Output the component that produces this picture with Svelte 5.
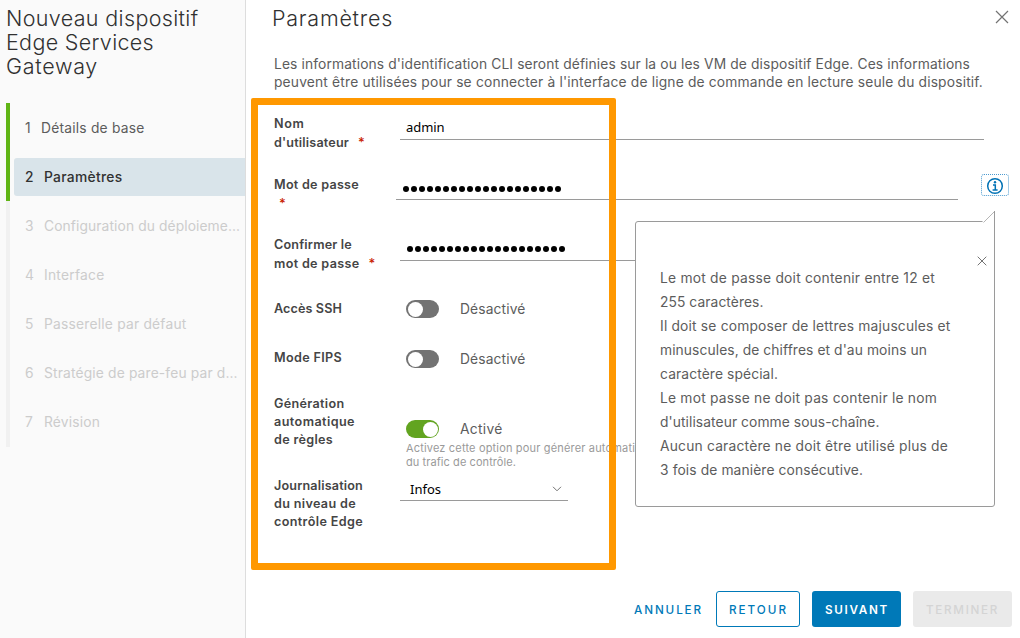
<script>
  const title = [['Nouveau dispositif', 192.5], ['Edge Services', 148], ['Gateway', 92]];

  const steps = [
    { label: 'Détails de base', width: 103.5, state: 'done' },
    { label: 'Paramètres', width: 78.5, state: 'current' },
    { label: 'Configuration du déploieme…', width: 196, state: 'todo' },
    { label: 'Interface', width: 60.5, state: 'todo' },
    { label: 'Passerelle par défaut', width: 142.5, state: 'todo' },
    { label: 'Stratégie de pare-feu par d…', width: 193.5, state: 'todo' },
    { label: 'Révision', width: 56, state: 'todo' }
  ];

  const intro = [
    ["Les informations d'identification CLI seront définies sur la ou les VM de dispositif Edge. Ces informations", 696],
    ["peuvent être utilisées pour se connecter à l'interface de ligne de commande en lecture seule du dispositif.", 709]
  ];

  const rules = [
    ['Le mot de passe doit contenir entre 12 et', 275],
    ['255 caractères.', 103.5],
    ['Il doit se composer de lettres majuscules et', 290.5],
    ["minuscules, de chiffres et d'au moins un", 267],
    ['caractère spécial.', 118],
    ['Le mot passe ne doit pas contenir le nom', 277],
    ["d'utilisateur comme sous-chaîne.", 219.5],
    ['Aucun caractère ne doit être utilisé plus de', 288],
    ['3 fois de manière consécutive.', 203]
  ];

  const dots = Array.from({ length: 20 });

  // Tracks a line of text so that it fills the given measure.
  function measure(node, width) {
    const natural = node.getBoundingClientRect().width;
    node.style.letterSpacing = (width - natural) / node.textContent.length + 'px';
  }
</script>

{#snippet line(text, width)}<span class="line" use:measure={width}>{text}</span>{/snippet}

{#snippet password()}
  <span class="dots">{#each dots as _}<i></i>{/each}</span>
{/snippet}

<div class="wizard">
  <aside>
    <h1>{#each title as [t, w]}{@render line(t, w)}{/each}</h1>
    <ol>
      {#each steps as step, i}
        <li class={step.state}>
          <div class="step">
            <span class="num">{i + 1}</span>{@render line(step.label, step.width)}
          </div>
        </li>
      {/each}
    </ol>
  </aside>

  <main>
    <header>
      <h2>{@render line('Paramètres', 121)}</h2>
      <svg class="close" width="14" height="14" viewBox="0 0 14 14"><path d="M1 1l12 12M13 1L1 13" /></svg>
    </header>
    <p class="intro">{#each intro as [t, w]}{@render line(t, w)}{/each}</p>

    <form>
      <div class="row user">
        <div class="label">
          {@render line('Nom', 30.5)}
          <div class="req">{@render line("d'utilisateur", 75)}<b>*</b></div>
        </div>
        <div class="field"><span class="value">{@render line('admin', 38.5)}</span></div>
      </div>
      <div class="row pass">
        <div class="label">
          {@render line('Mot de passe', 85)}
          <b class="below">*</b>
        </div>
        <div class="field">{@render password()}</div>
        <span class="info">
          <svg width="18" height="18" viewBox="0 0 18 18">
            <circle cx="9" cy="9" r="7.3" />
            <path d="M7 8h2.3v5M6.6 13h5" />
            <circle class="tittle" cx="9" cy="5.2" r="1.2" />
          </svg>
        </span>
      </div>
      <div class="row confirm">
        <div class="label">
          {@render line('Confirmer le', 78)}
          <div class="req">{@render line('mot de passe', 85.5)}<b>*</b></div>
        </div>
        <div class="field">{@render password()}</div>
      </div>
      <div class="row ssh">
        <div class="label">{@render line('Accès SSH', 68)}</div>
        <div class="switch"><span class="toggle"></span>{@render line('Désactivé', 65.5)}</div>
      </div>
      <div class="row fips">
        <div class="label">{@render line('Mode FIPS', 68)}</div>
        <div class="switch"><span class="toggle"></span>{@render line('Désactivé', 65.5)}</div>
      </div>
      <div class="row auto">
        <div class="label">
          {@render line('Génération', 70.5)}{@render line('automatique', 81)}{@render line('de règles', 59)}
        </div>
        <div>
          <div class="switch"><span class="toggle on"></span>{@render line('Activé', 42.5)}</div>
          <div class="help">
            {@render line('Activez cette option pour générer automatiquement', 276)}{@render line('du trafic de contrôle.', 110)}
          </div>
        </div>
      </div>
      <div class="row log">
        <div class="label">
          {@render line('Journalisation', 89)}{@render line('du niveau de', 82)}{@render line('contrôle Edge', 89)}
        </div>
        <div class="select">
          {@render line('Infos', 31)}
          <svg width="10" height="6" viewBox="0 0 10 6"><path d="M1 .8l4 4 4-4" /></svg>
        </div>
      </div>
    </form>

    <footer>
      <span class="btn link">{@render line('ANNULER', 69)}</span>
      <span class="btn outline">{@render line('RETOUR', 59)}</span>
      <span class="btn primary">{@render line('SUIVANT', 64)}</span>
      <span class="btn disabled">{@render line('TERMINER', 73)}</span>
    </footer>
  </main>

  <div class="highlight"></div>

  <div class="popover">
    <svg class="pointer" width="13" height="13" viewBox="0 0 13 13">
      <path class="fill" d="M0 13V11L12 0V13z" />
      <path class="slope" d="M1.5 11.5L12.5 .5" />
      <path class="side" d="M12.5 0V13" />
    </svg>
    <svg class="dismiss" width="10" height="10" viewBox="0 0 10 10"><path d="M.7 .7l8.6 8.6M9.3 .7L.7 9.3" /></svg>
    {#each rules as [t, w]}{@render line(t, w)}{/each}
  </div>
</div>

<style>
  :global(body) { margin: 0; background: #fff; }
  .wizard {
    position: relative;
    display: flex;
    width: 1020px;
    height: 638px;
    overflow: hidden;
    background: #fff;
    color: #5c5c5c;
    font: 400 13.8px/18px Inter, sans-serif;
  }
  .line { display: block; width: max-content; white-space: nowrap; }
  h1, h2, p, ol { margin: 0; padding: 0; font-weight: 300; }
  svg { fill: none; stroke: #737373; flex: none; }

  aside { width: 245px; flex: none; background: #fafafa; border-right: 1px solid #ddd; }
  h1 { box-sizing: border-box; padding: 6px 0 0 6px; height: 103px; font-size: 21.5px; line-height: 24px; color: #313131; }
  ol { list-style: none; padding-left: 6px; }
  li {
    box-sizing: border-box;
    height: 49px;
    padding: 6px 0 5px 4px;
    border-left: 4px solid #f1f1f1;
    font-weight: 400;
    color: #ccc;
  }
  li:last-child { height: 50px; }
  li.done, li.current { border-color: #60b515; }
  li.done { color: #5c5c5c; }
  li.current { color: #313131; font-weight: 500; }
  .step { display: flex; align-items: center; height: 38px; padding-left: 11px; border-radius: 3px 0 0 3px; }
  .current .step { background: #d9e4ea; }
  .num { width: 19px; }
  .done .num { width: 16px; }

  main { flex: 1; display: flex; flex-direction: column; padding-left: 28px; }
  header { display: flex; justify-content: space-between; padding: 6px 11px 0 0; height: 48px; }
  h2 { margin-left: -2px; font-size: 21.5px; line-height: 24px; color: #313131; }
  .close { margin-top: 4px; stroke-width: 1.2; }
  .intro { height: 59px; padding-top: 1px; font-weight: 400; }

  form { flex: 1; }
  .row { display: flex; align-items: flex-start; }
  .label { width: 126px; flex: none; font-size: 12.6px; font-weight: 600; line-height: 19px; color: #454545; }
  .auto .label, .log .label { line-height: 18px; }
  .req { display: flex; }
  b { color: #c92100; font-size: 13px; font-weight: 500; }
  .req b { margin-left: 9px; }
  .below { display: block; margin-left: 5px; }
  .field { box-sizing: border-box; width: 584px; height: 26px; padding-left: 6px; border-bottom: 1px solid #9a9a9a; }
  .value { color: #000; font: 13px/27px "Noto Sans", sans-serif; }
  .user { height: 61px; }
  .pass { height: 60px; }
  .pass .field { width: 562px; height: 25px; margin-left: -4px; }
  .confirm { height: 64px; }
  .dots { display: flex; gap: 2px; padding: 11px 0 0 1px; }
  .dots i { width: 6px; height: 6px; border-radius: 50%; background: #000; }
  .info {
    box-sizing: border-box;
    width: 28px;
    height: 22px;
    margin: -1px 0 0 23px;
    padding: 2px 4px 0;
    border: 1px dotted #4a9ad0;
    border-radius: 3px;
  }
  .info svg { display: block; stroke: #0072b5; stroke-width: 1.5; }
  .info .tittle { fill: #0072b5; stroke: none; }
  .ssh { height: 49px; }
  .fips { height: 47px; }
  .auto { height: 82px; }
  .switch { display: flex; align-items: center; height: 18px; margin: 1px 0 0 6px; gap: 21px; }
  .fips .switch { margin-top: 2px; }
  .auto .switch { margin-top: 25px; }
  .toggle { box-sizing: border-box; display: flex; width: 33px; height: 18px; padding: 1.5px; border-radius: 9px; background: #737373; }
  .toggle::after { content: ''; width: 15px; height: 15px; border-radius: 50%; background: #fff; }
  .toggle.on { justify-content: flex-end; background: #62a420; }
  .help { margin: 3px 0 0 6px; font-size: 11px; line-height: 14px; color: #9a9a9a; }
  .select {
    box-sizing: border-box;
    display: flex;
    justify-content: space-between;
    align-items: center;
    width: 168px;
    height: 24px;
    padding: 1px 6px 0 10px;
    border-bottom: 1px solid #9a9a9a;
    color: #000;
    font: 13px/24px "Noto Sans", sans-serif;
  }

  footer { display: flex; align-items: center; height: 36px; margin-bottom: 11px; padding-right: 8px; justify-content: flex-end; }
  .btn {
    box-sizing: border-box;
    display: flex;
    align-items: center;
    height: 36px;
    margin-left: 12px;
    padding: 1px 0 0 12px;
    border: 1px solid transparent;
    border-radius: 3px;
    color: #0079b8;
    font-size: 11.7px;
    font-weight: 500;
  }
  .link { width: 83px; padding-left: 0; margin: 0; }
  .outline { width: 84px; margin: 0; border-color: #0079b8; }
  .primary { width: 89px; background: #0079b8; color: #fff; font-weight: 600; }
  .disabled { width: 99px; background: #eaeaea; color: #d4d4d4; }

  .highlight {
    position: absolute;
    left: 251px;
    top: 98px;
    box-sizing: border-box;
    width: 365px;
    height: 472px;
    border: 7px solid #ff9800;
    border-radius: 2px;
  }
  .popover {
    position: absolute;
    left: 635px;
    top: 221px;
    box-sizing: border-box;
    width: 360px;
    height: 286px;
    padding: 44px 24px 0;
    border: 1px solid #9a9a9a;
    border-radius: 3px;
    background: #fff;
    line-height: 24px;
  }
  .pointer { position: absolute; right: -1px; top: -11px; }
  .pointer .fill { fill: #fff; stroke: none; }
  .pointer .slope { stroke: #b5b5b5; }
  .pointer .side { stroke: #9a9a9a; }
  .dismiss { position: absolute; right: 7px; top: 34px; }
</style>
